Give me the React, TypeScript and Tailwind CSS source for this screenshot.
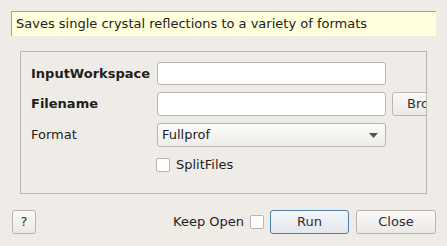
import React from "react";

const font = { fontFamily: '"DejaVu Sans", sans-serif' };

function Btn({ children, className = "", primary = false }: { children: React.ReactNode; className?: string; primary?: boolean }) {
  return (
    <div
      className={
        "flex shrink-0 items-center justify-center rounded-[3px] border text-[13px] text-[#2e2e2e] " +
        (primary
          ? "border-[#4d7fae] bg-gradient-to-b from-[#f4f6f8] to-[#e3e8ee] "
          : "border-[#b9b6b1] bg-gradient-to-b from-[#fbfaf9] to-[#ebe9e6] ") +
        className
      }
    >
      {children}
    </div>
  );
}

export default function App() {
  return (
    <div className="w-[447px] h-[246px] bg-[#efebe7] overflow-hidden text-[#1e1e1e]" style={font}>
      <div className="pt-[11px] px-[11px]">
        <div className="h-[25px] w-[425px] border-t border-l border-[#a4a19c] bg-[#ffffdc] pl-[4px] flex items-center text-[13px] text-[#222]">
          Saves single crystal reflections to a variety of formats
        </div>
        <div className="mt-[15px] ml-[9px] w-[407px] h-[143px] border border-[#bab6b0] overflow-hidden pl-[10px] pt-[10px]">
          <div className="flex items-center h-[23px]">
            <div className="w-[126px] shrink-0 font-bold text-[13px]">InputWorkspace</div>
            <div className="w-[229px] shrink-0 h-[23px] rounded-[3px] border border-[#b9b6b1] bg-white" />
          </div>
          <div className="flex items-center h-[24px] mt-[7px]">
            <div className="w-[126px] shrink-0 font-bold text-[13px]">Filename</div>
            <div className="w-[229px] shrink-0 h-[24px] rounded-[3px] border border-[#b9b6b1] bg-white" />
            <Btn className="ml-[6px] w-[80px] h-[24px] justify-start pl-[14px]">Browse</Btn>
          </div>
          <div className="flex items-center h-[24px] mt-[7px]">
            <div className="w-[126px] shrink-0 text-[13px]">Format</div>
            <div className="w-[229px] shrink-0 h-[24px] rounded-[3px] border border-[#b9b6b1] bg-gradient-to-b from-[#fcfcfb] to-[#eeece9] flex items-center pl-[4px] pr-[7px] text-[13px]">
              <span className="flex-1">Fullprof</span>
              <svg width="9" height="5" viewBox="0 0 9 5"><path d="M0 0h9L4.5 5z" fill="#555" /></svg>
            </div>
          </div>
          <div className="flex items-center h-[14px] mt-[11px] pl-[125px]">
            <div className="w-[14px] h-[14px] shrink-0 rounded-[2px] border border-[#b9b6b1] bg-white" />
            <span className="ml-[6px] text-[13px]">SplitFiles</span>
          </div>
        </div>
        <div className="mt-[16px] flex items-center h-[24px]">
          <Btn className="ml-[1px] w-[24px] h-[24px]">?</Btn>
          <div className="flex-1" />
          <span className="text-[13px]">Keep Open</span>
          <div className="ml-[6px] w-[14px] h-[14px] shrink-0 rounded-[2px] border border-[#b9b6b1] bg-white" />
          <Btn primary className="ml-[6px] w-[79px] h-[24px]">Run</Btn>
          <Btn className="ml-[7px] w-[80px] h-[24px]">Close</Btn>
        </div>
      </div>
    </div>
  );
}
